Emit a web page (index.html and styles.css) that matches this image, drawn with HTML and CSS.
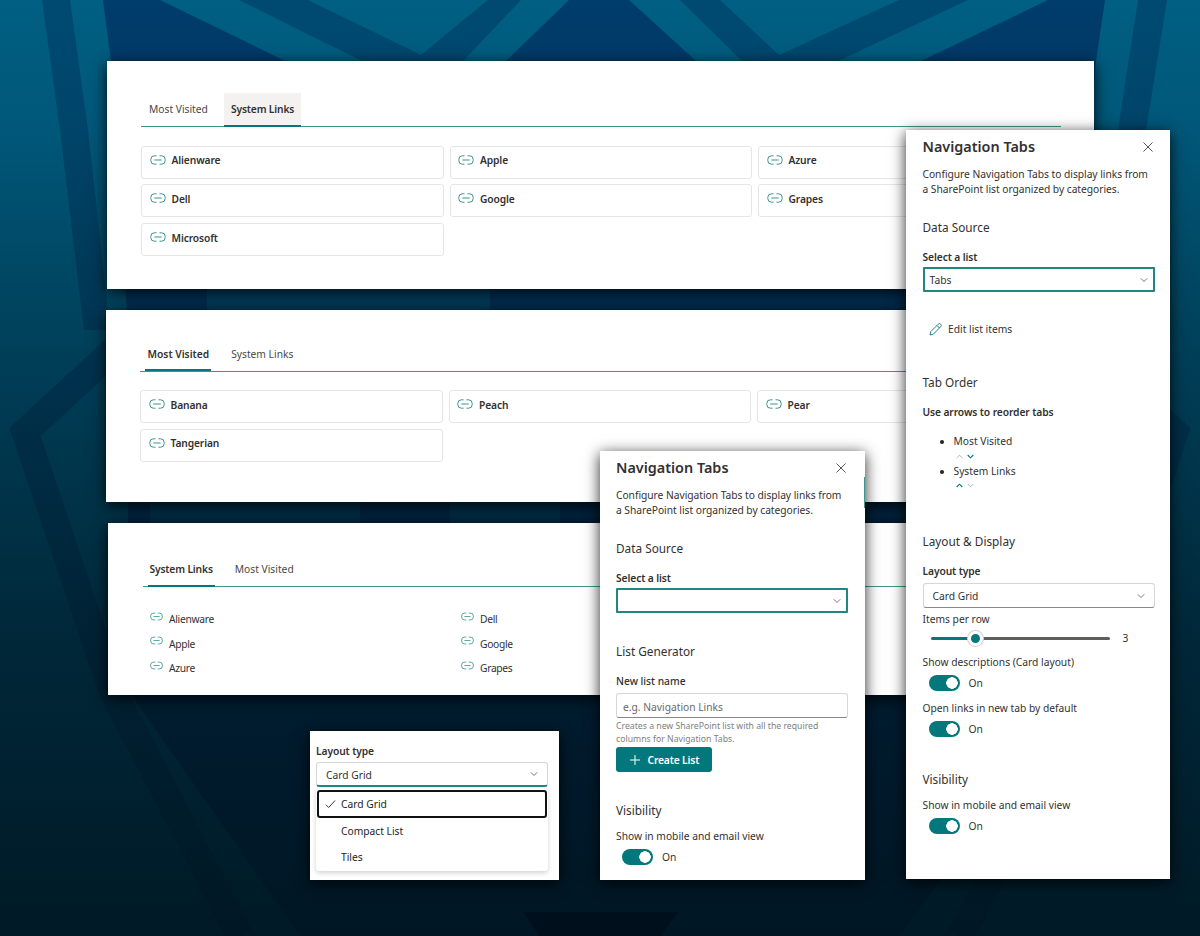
FILE: index.html
```
<!DOCTYPE html>
<html lang="en">
<head>
    <meta charset="UTF-8">
    <meta name="viewport" content="width=device-width, initial-scale=1.0">
    <title>Navigation Tabs</title>
    <link rel="stylesheet" href="styles.css">
</head>
<body>
    <!-- Shared icons -->
    <svg class="sprite" width="0" height="0">
        <symbol id="link" viewBox="0 0 16 10">
            <path d="M6.5 .8H4.4a3.6 3.6 0 0 0-3.6 3.6v1.2a3.6 3.6 0 0 0 3.6 3.6h2.1M9.5 .8h2.1a3.6 3.6 0 0 1 3.6 3.6v1.2a3.6 3.6 0 0 1-3.6 3.6H9.5M4.3 5h7.4"/>
        </symbol>
        <symbol id="chevron" viewBox="0 0 8 8">
            <path d="M.8 2.3L4 5.5l3.2-3.2"/>
        </symbol>
        <symbol id="close" viewBox="0 0 10 10">
            <path d="M.5 .5l9 9M9.5 .5l-9 9"/>
        </symbol>
    </svg>

    <div class="stage">
        <svg class="backdrop" viewBox="0 0 1200 936">
            <defs>
                <linearGradient id="fade" x1="0" y1="0" x2="0" y2="1">
                    <stop offset="0" stop-color="#00121c" stop-opacity="0"/>
                    <stop offset=".14" stop-color="#00121c" stop-opacity=".1"/>
                    <stop offset=".38" stop-color="#00121c" stop-opacity=".42"/>
                    <stop offset=".68" stop-color="#00121c" stop-opacity=".72"/>
                    <stop offset="1" stop-color="#00121c" stop-opacity=".9"/>
                </linearGradient>
            </defs>
            <rect width="1200" height="936" fill="#003c6c"/>
            <!-- left side -->
            <path fill="#005f83" d="M0 0H103L111 61L128 330V690L300 936H0Z"/>
            <path fill="#004a72" d="M42 0H70L88 130L110 330H84L60 130Z"/>
            <path fill="none" stroke="#004a72" stroke-width="27" d="M130 335L25 432L112 690L240 936"/>
            <path fill="#005f83" d="M160 0H569L506 61H285Z"/>
            <path fill="#004a72" d="M239 0H308L421 55L488 0H521L463 61H362Z"/>
            <!-- right side -->
            <path fill="#005f83" d="M1200 0H1105L1096 61L1075 330V690L900 936H1200Z"/>
            <path fill="#004a72" d="M1138 0H1167L1146 130H1118Z"/>
            <path fill="none" stroke="#004a72" stroke-width="27" d="M1070 335L1175 432L1092 690L960 936"/>
            <path fill="#005f83" d="M629 0H1048L921 61H696Z"/>
            <path fill="#004a72" d="M680 0H720L779 55L899 0H968L838 61H742Z"/>
            <!-- strips between the web parts -->
            <path fill="#005f83" d="M207 285H490V314H207ZM150 500H360V526H150ZM450 500H560V526H450Z" opacity=".6"/>
            <rect width="1200" height="936" fill="url(#fade)"/>
            <path fill="#000f1c" d="M523 912H678L660 936H540Z"/>
        </svg>

        <!-- Card grid, System Links open -->
        <section class="webpart webpart-system">
            <nav class="tabs">
                <span class="tab">Most Visited</span>
                <span class="tab active hovered">System Links</span>
            </nav>
            <div class="cards">
                <div class="card"><svg><use href="#link"/></svg>Alienware</div>
                <div class="card"><svg><use href="#link"/></svg>Apple</div>
                <div class="card"><svg><use href="#link"/></svg>Azure</div>
                <div class="card"><svg><use href="#link"/></svg>Dell</div>
                <div class="card"><svg><use href="#link"/></svg>Google</div>
                <div class="card"><svg><use href="#link"/></svg>Grapes</div>
                <div class="card"><svg><use href="#link"/></svg>Microsoft</div>
            </div>
        </section>

        <!-- Card grid, Most Visited open -->
        <section class="webpart webpart-visited">
            <nav class="tabs">
                <span class="tab active">Most Visited</span>
                <span class="tab">System Links</span>
            </nav>
            <div class="cards">
                <div class="card"><svg><use href="#link"/></svg>Banana</div>
                <div class="card"><svg><use href="#link"/></svg>Peach</div>
                <div class="card"><svg><use href="#link"/></svg>Pear</div>
                <div class="card"><svg><use href="#link"/></svg>Tangerian</div>
            </div>
        </section>

        <!-- Compact list -->
        <section class="webpart webpart-compact">
            <nav class="tabs">
                <span class="tab active">System Links</span>
                <span class="tab">Most Visited</span>
            </nav>
            <div class="compact">
                <div class="row"><svg><use href="#link"/></svg>Alienware</div>
                <div class="row"><svg><use href="#link"/></svg>Dell</div>
                <div class="row"><svg><use href="#link"/></svg>Apple</div>
                <div class="row"><svg><use href="#link"/></svg>Google</div>
                <div class="row"><svg><use href="#link"/></svg>Azure</div>
                <div class="row"><svg><use href="#link"/></svg>Grapes</div>
            </div>
        </section>

        <!-- Layout dropdown -->
        <section class="picker">
            <div class="label strong">Layout type</div>
            <div class="select open"><span>Card Grid</span><svg class="chevron"><use href="#chevron"/></svg></div>
            <div class="options">
                <div class="option selected">
                    <svg class="check" viewBox="0 0 12 10"><path d="M1 5.8l3 3L11 1.2"/></svg>Card Grid
                </div>
                <div class="option">Compact List</div>
                <div class="option">Tiles</div>
            </div>
        </section>

        <!-- Pane before a list is chosen -->
        <aside class="pane pane-empty">
            <header><h2>Navigation Tabs</h2><svg class="close"><use href="#close"/></svg></header>
            <p class="desc">Configure Navigation Tabs to display links from<br>a SharePoint list organized by categories.</p>
            <h3 class="data-source">Data Source</h3>
            <div class="label strong spaced">Select a list</div>
            <div class="select focused"><span></span><svg class="chevron"><use href="#chevron"/></svg></div>
            <h3 class="generator">List Generator</h3>
            <div class="label medium spaced">New list name</div>
            <div class="textbox">e.g. Navigation Links</div>
            <p class="help">Creates a new SharePoint list with all the required<br>columns for Navigation Tabs.</p>
            <button class="create"><svg viewBox="0 0 10 10"><path d="M5 0v10M0 5h10"/></svg>Create List</button>
            <h3 class="visibility">Visibility</h3>
            <div class="label toggle-label">Show in mobile and email view</div>
            <div class="toggle"><i></i>On</div>
            <span class="edge"></span>
        </aside>

        <!-- Pane with a list connected -->
        <aside class="pane pane-full">
            <header><h2>Navigation Tabs</h2><svg class="close"><use href="#close"/></svg></header>
            <p class="desc">Configure Navigation Tabs to display links from<br>a SharePoint list organized by categories.</p>
            <h3 class="data-source">Data Source</h3>
            <div class="label strong spaced">Select a list</div>
            <div class="select focused"><span>Tabs</span><svg class="chevron"><use href="#chevron"/></svg></div>
            <div class="edit">
                <svg viewBox="0 0 13 13"><path d="M1 12l.8-3.4L9.2 1.2a1.5 1.5 0 0 1 2.5 2.5L4.3 11.2zM8 2.5L10.5 5"/></svg>Edit list items
            </div>
            <h3 class="order">Tab Order</h3>
            <div class="label strong spaced">Use arrows to reorder tabs</div>
            <ul class="order-list">
                <li>Most Visited
                    <div class="arrows"><svg class="up off"><use href="#chevron"/></svg><svg><use href="#chevron"/></svg></div>
                </li>
                <li>System Links
                    <div class="arrows"><svg class="up"><use href="#chevron"/></svg><svg class="off"><use href="#chevron"/></svg></div>
                </li>
            </ul>
            <h3 class="display">Layout &amp; Display</h3>
            <div class="label strong spaced">Layout type</div>
            <div class="select layout"><span>Card Grid</span><svg class="chevron"><use href="#chevron"/></svg></div>
            <div class="label items">Items per row</div>
            <div class="slider"><div class="track"><i></i></div>3</div>
            <div class="label toggle-label">Show descriptions (Card layout)</div>
            <div class="toggle"><i></i>On</div>
            <div class="label toggle-label">Open links in new tab by default</div>
            <div class="toggle"><i></i>On</div>
            <h3 class="visibility">Visibility</h3>
            <div class="label toggle-label">Show in mobile and email view</div>
            <div class="toggle"><i></i>On</div>
        </aside>
    </div>
</body>
</html>
```
FILE: styles.css
```
* {
    box-sizing: border-box;
}
body {
    margin: 0;
    font-family: "Noto Sans", "Open Sans", sans-serif;
    font-size: 10.25px;
    line-height: 16px;
    color: #323130;
}
svg {
    fill: none;
    stroke: currentColor;
    flex: none;
}
h2, h3, p, ul {
    margin: 0;
    padding: 0;
}
.sprite {
    position: absolute;
}
.stage {
    position: relative;
    width: 1200px;
    height: 936px;
    overflow: hidden;
}
.backdrop {
    display: block;
    width: 1200px;
    height: 936px;
    stroke: none;
}

/* Windows on the canvas */
.webpart, .pane, .picker {
    position: absolute;
    background: #fff;
    box-shadow: 0 3px 14px rgba(0,0,0,0.85);
}
.webpart-system {
    left: 107px;
    top: 61px;
    width: 987px;
    height: 228px;
    padding: 31.5px 33px 0 34px;
}
.webpart-visited {
    left: 105.5px;
    top: 310px;
    width: 987px;
    height: 192px;
    padding: 27px 33px 0 34.5px;
}
.webpart-compact {
    left: 108px;
    top: 523px;
    width: 987px;
    height: 172px;
    padding: 29.5px 33px 0 35px;
}

/* Tabs */
.tabs {
    display: flex;
    gap: 8px;
    height: 34.5px;
    border-bottom: 1px solid #3d9590;
}
.tab {
    height: 34px;
    padding: 0 7px;
    margin-left: 1px;
    line-height: 33px;
    color: #4a4846;
    white-space: nowrap;
}
.tab.active {
    position: relative;
    font-weight: 600;
    letter-spacing: -0.15px;
    color: #323130;
}
.tab.active::after {
    content: "";
    position: absolute;
    left: 5px;
    right: 5px;
    bottom: 0;
    height: 2px;
    background: #03787c;
}
.tab.hovered {
    background: #f3f2f1;
}
.tab.hovered::after {
    left: 0;
    right: 0;
}
.webpart-visited .tab, .webpart-compact .tab {
    margin-left: 0;
}
.webpart-visited .tab {
    line-height: 35px;
}
.webpart-visited .tab.active {
    padding-left: 7.5px;
    letter-spacing: 0;
}
.webpart-compact .tab.active {
    padding-left: 6.5px;
}

/* Cards */
.cards {
    display: grid;
    grid-template-columns: repeat(3, 302.5px);
    grid-auto-rows: 33px;
    gap: 5.8px 6px;
    margin-top: 18.5px;
}
.card {
    display: flex;
    gap: 6px;
    height: 33px;
    padding: 5.5px 7.5px;
    border: 1px solid #e6e6e6;
    border-radius: 3px;
    font-weight: 600;
    letter-spacing: -0.12px;
}
.card svg {
    width: 16px;
    height: 10px;
    margin-top: 2.5px;
    color: #3c918c;
}
.edge {
    position: absolute;
    right: 0;
    top: 26px;
    width: 1px;
    height: 31px;
    background: #3d9590;
}

/* Compact list */
.compact {
    display: grid;
    grid-template-columns: 311px 311px;
    grid-auto-rows: 24.7px;
    margin: 23px 0 0 7px;
}
.row {
    display: flex;
    gap: 6px;
    line-height: 19px;
    letter-spacing: -0.3px;
}
.row svg {
    width: 13px;
    height: 9px;
    margin-top: 1.5px;
    color: #3c918c;
}

/* Form controls */
.label {
    height: 16px;
    white-space: nowrap;
}
.strong {
    font-weight: 600;
    letter-spacing: -0.1px;
}
.medium {
    font-weight: 500;
}
.spaced {
    margin-top: 12px;
}
.select {
    display: flex;
    align-items: center;
    justify-content: space-between;
    height: 25px;
    margin-top: 4px;
    padding: 0 9px;
    border: 1px solid #d6d6d6;
    border-bottom-color: #8a8886;
    border-radius: 3px;
}
.select.focused {
    margin-top: 2px;
    padding: 0 5px;
    border: 2px solid #218582;
    border-radius: 1px;
}
.select.open {
    margin-top: 3.5px;
    border-bottom: 2px solid #218582;
}
.chevron {
    width: 8px;
    height: 8px;
    color: #777;
}

/* Property panes */
.pane {
    width: 264px;
    padding: 7px 16px 0;
}
.pane-empty {
    left: 600px;
    top: 451px;
    width: 265px;
    height: 428.5px;
    padding-right: 17px;
}
.pane-full {
    left: 906px;
    top: 130px;
    height: 749px;
    padding-left: 16.5px;
    padding-right: 15px;
}
.pane header {
    display: flex;
    justify-content: space-between;
    align-items: center;
    height: 20px;
}
.pane h2 {
    font-size: 14.4px;
    font-weight: 600;
    line-height: 20px;
}
.close {
    width: 10px;
    height: 10px;
    margin-right: 2px;
    color: #555;
}
.desc {
    margin-top: 10px;
    line-height: 14.7px;
    letter-spacing: -0.03px;
    white-space: nowrap;
}
.pane h3 {
    height: 20px;
    font-size: 11.8px;
    font-weight: 400;
    line-height: 20px;
}
.pane .data-source {
    margin-top: 20.6px;
}
.pane .generator {
    margin-top: 28px;
}
.pane .order {
    margin-top: 35px;
}
.pane .display {
    margin-top: 39px;
}
.pane .visibility {
    margin-top: 32.5px;
    margin-bottom: 8px;
}
.pane-empty .visibility {
    margin-top: 28px;
}
.pane .visibility + .toggle-label {
    margin-top: 0;
}
.edit {
    display: flex;
    align-items: center;
    gap: 6px;
    height: 16px;
    margin: 29.4px 0 0 6.5px;
}
.edit svg {
    width: 13px;
    height: 13px;
    color: #218582;
}
.order-list {
    margin: 13px 0 0 31px;
}
.order-list li {
    height: 29.5px;
}
.order-list li::marker {
    color: #222;
}
.arrows {
    display: flex;
    gap: 4px;
    height: 14px;
    padding: 3.5px 0 0 2px;
}
.arrows svg {
    width: 7px;
    height: 7px;
    color: #03787c;
    stroke-width: 1.3px;
}
.arrows .up {
    transform: rotate(180deg);
}
.arrows .off {
    color: #a5a5a5;
    stroke-width: 1px;
}
.items {
    margin-top: 2.3px;
}
.slider {
    display: flex;
    align-items: center;
    gap: 13px;
    height: 16px;
    margin: 3.7px 0 0 8px;
}
.track {
    position: relative;
    width: 179px;
    height: 3px;
    border-radius: 2px;
    background: linear-gradient(to right, #03787c 45px, #605e5c 45px);
}
.track i {
    position: absolute;
    left: 37px;
    top: -6px;
    width: 15px;
    height: 15px;
    border: 3px solid #fff;
    border-radius: 50%;
    background: #03787c;
    box-shadow: 0 0 0 1px #d0d0d0;
}
.toggle-label {
    margin-top: 8px;
}
.toggle {
    display: flex;
    align-items: center;
    gap: 9px;
    height: 16px;
    margin: 4.8px 0 9px 6px;
}
.toggle i {
    width: 31px;
    height: 16px;
    border-radius: 8px;
    background: radial-gradient(circle at 23px 8px, #fff 5.5px, #03787c 6px);
}
.textbox {
    height: 25px;
    margin-top: 4px;
    padding: 0 6px;
    border: 1px solid #d6d6d6;
    border-bottom-color: #8a8886;
    border-radius: 3px;
    line-height: 26px;
    color: #6b6966;
}
.help {
    margin-top: 2px;
    font-size: 8.7px;
    line-height: 12.5px;
    color: #808080;
    white-space: nowrap;
}
.create {
    display: flex;
    align-items: center;
    gap: 7.5px;
    width: 96px;
    height: 25px;
    margin-top: 2px;
    padding: 0 14px;
    border: 0;
    border-radius: 3px;
    background: #03787c;
    color: #fff;
    font-family: inherit;
    font-size: 10.25px;
    font-weight: 600;
    letter-spacing: -0.15px;
    white-space: nowrap;
}
.create svg {
    width: 10px;
    height: 10px;
}

/* Layout dropdown */
.picker {
    left: 309.5px;
    top: 730.5px;
    width: 249.5px;
    height: 149px;
    padding: 12px 11px 0 6.5px;
}
.select.open span {
    padding-top: 1px;
}
.options {
    height: 82px;
    margin-top: 2px;
    padding: 1px;
    border-radius: 3px;
    background: #fff;
    box-shadow: 0 2px 5px rgba(0,0,0,0.18);
}
.option {
    display: flex;
    align-items: center;
    height: 26px;
    padding-left: 24px;
    color: #242424;
}
.option.selected {
    height: 28px;
    padding-left: 6px;
    margin-bottom: -0.5px;
    border: 2px solid #111;
    border-radius: 3px;
}
.check {
    width: 11px;
    height: 10px;
    margin-right: 5px;
}
```
